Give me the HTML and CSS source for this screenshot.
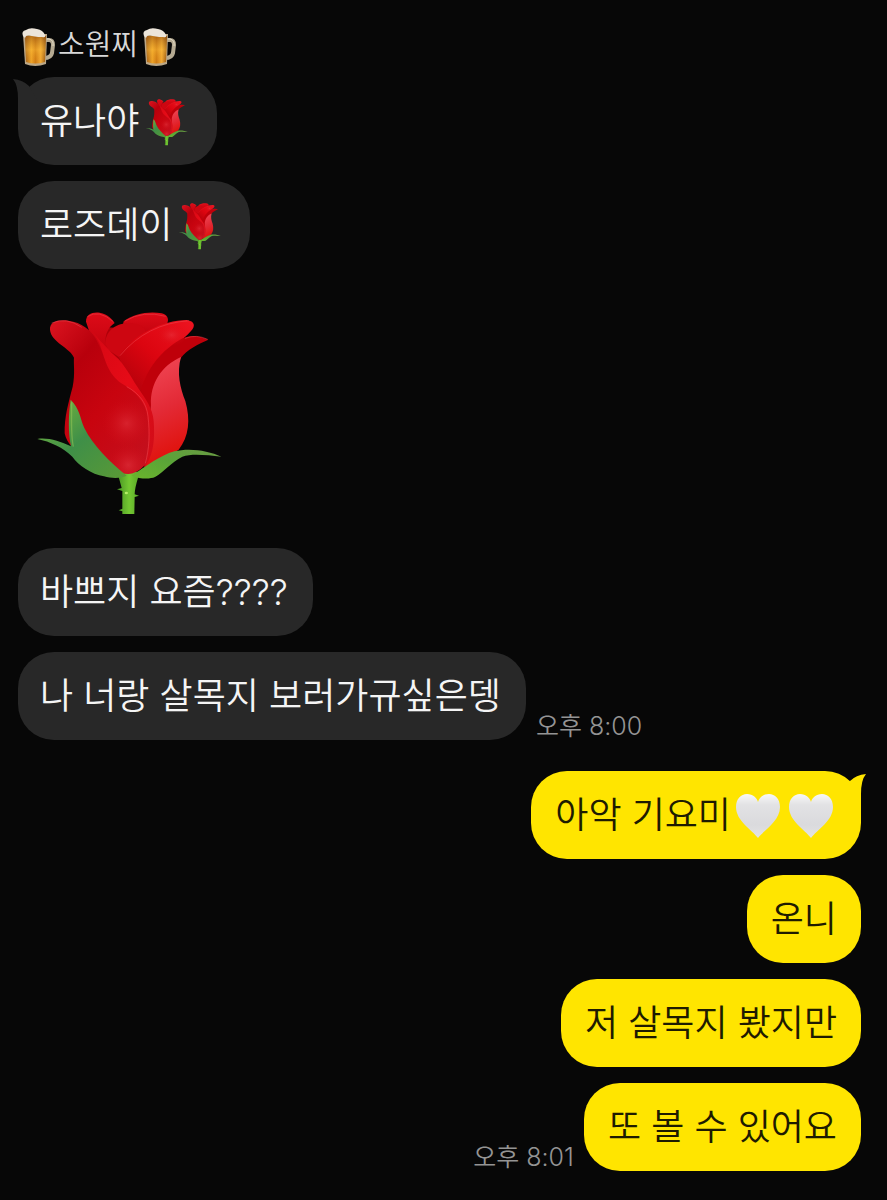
FILE: index.html
```html
<!DOCTYPE html>
<html lang="ko">
<head>
    <meta charset="UTF-8">
    <meta name="viewport" content="width=device-width, initial-scale=1.0">
    <title>소원찌</title>
    <link rel="stylesheet" href="styles.css">
</head>
<body>
    <!-- shared emoji drawings -->
    <svg class="defs" aria-hidden="true">
        <defs>
            <linearGradient id="petalLeft" x1="0" y1="0" x2="0.8" y2="1">
                <stop offset="0" stop-color="#dc1420"/>
                <stop offset="0.3" stop-color="#b8000c"/>
                <stop offset="0.6" stop-color="#c8040f"/>
                <stop offset="1" stop-color="#c4101d"/>
            </linearGradient>
            <linearGradient id="petalRight" x1="0.4" y1="0" x2="0.6" y2="1">
                <stop offset="0" stop-color="#f04654"/>
                <stop offset="0.45" stop-color="#e32a36"/>
                <stop offset="0.85" stop-color="#e01410"/>
                <stop offset="1" stop-color="#d8303c"/>
            </linearGradient>
            <linearGradient id="petalInner" x1="1" y1="0" x2="0.2" y2="1">
                <stop offset="0" stop-color="#ee1420"/>
                <stop offset="0.5" stop-color="#dc0510"/>
                <stop offset="1" stop-color="#a80009"/>
            </linearGradient>
            <linearGradient id="petalBack" x1="0" y1="0" x2="0" y2="1">
                <stop offset="0" stop-color="#dd0b18"/>
                <stop offset="1" stop-color="#b8000a"/>
            </linearGradient>
            <linearGradient id="petalFold" x1="0" y1="0" x2="1" y2="1">
                <stop offset="0" stop-color="#d40713"/>
                <stop offset="0.5" stop-color="#e60b17"/>
                <stop offset="1" stop-color="#cf0d18"/>
            </linearGradient>
            <radialGradient id="petalGlow" cx="0.5" cy="0.5" r="0.5">
                <stop offset="0" stop-color="#e83a44" stop-opacity="0.5"/>
                <stop offset="1" stop-color="#d80812" stop-opacity="0"/>
            </radialGradient>
            <linearGradient id="leafLeft" x1="0" y1="0" x2="1" y2="1">
                <stop offset="0" stop-color="#7fbb3c"/>
                <stop offset="0.5" stop-color="#3f8f48"/>
                <stop offset="1" stop-color="#5a9a35"/>
            </linearGradient>
            <linearGradient id="leafRight" x1="0" y1="1" x2="1" y2="0">
                <stop offset="0" stop-color="#6ab42c"/>
                <stop offset="0.5" stop-color="#5aa438"/>
                <stop offset="1" stop-color="#6a9a44"/>
            </linearGradient>
            <linearGradient id="stem" x1="0" y1="0" x2="1" y2="0">
                <stop offset="0" stop-color="#3f8a20"/>
                <stop offset="0.5" stop-color="#74c832"/>
                <stop offset="1" stop-color="#4d9a22"/>
            </linearGradient>
            <linearGradient id="heartFill" x1="0" y1="0" x2="0" y2="1">
                <stop offset="0" stop-color="#f8f8f8"/>
                <stop offset="0.25" stop-color="#e2e2e4"/>
                <stop offset="0.7" stop-color="#dadadd"/>
                <stop offset="1" stop-color="#e4e4e4"/>
            </linearGradient>
            <linearGradient id="beerFill" x1="0" y1="0" x2="1" y2="0">
                <stop offset="0" stop-color="#9c5c1c"/>
                <stop offset="0.3" stop-color="#f0a528"/>
                <stop offset="0.5" stop-color="#d07c14"/>
                <stop offset="0.75" stop-color="#f2ab35"/>
                <stop offset="1" stop-color="#8c4e10"/>
            </linearGradient>
            <linearGradient id="beerShade" x1="0" y1="0" x2="0" y2="1">
                <stop offset="0" stop-color="#8a4a10" stop-opacity="0.5"/>
                <stop offset="0.5" stop-color="#ffc23c" stop-opacity="0.4"/>
                <stop offset="1" stop-color="#e08a18" stop-opacity="0"/>
            </linearGradient>
            <symbol id="rose" viewBox="0 0 660 690">
                <path fill="url(#stem)" d="M285 530 H370 L355 545 Q344 580 344 598 L357 602 L344 606 L343 657 L307 657 L307 649 L296 646 L307 641 L307 588 L291 583 L305 579 L296 546 Z"/>
                <ellipse cx="319" cy="594" rx="5" ry="4" fill="#b4ee66"/>
                <path fill="#ae0009" d="M215 95 L330 100 L480 120 L470 200 L420 440 L375 520 L300 400 Z"/>
                <path fill="url(#petalBack)" d="M311 79 C340 55 390 48 425 55 C445 60 447 75 441 86 L370 150 L300 130 Z"/>
                <path fill="#cd0611" d="M255 150 C255 105 290 84 330 84 C360 86 378 98 377 112 L310 195 L265 165 Z"/>
                <path fill="url(#petalInner)" d="M297 184 C335 120 430 75 500 75 C525 79 527 94 513 108 C490 135 440 165 420 210 C405 250 400 300 392 345 L320 260 Z"/>
                <path fill="#bf000a" d="M363 286 C385 210 430 165 475 137 C505 117 535 120 565 134 C535 147 500 165 483 188 L400 330 L383 335 Z"/>
                <path fill="url(#petalRight)" d="M483 186 C469 235 481 280 496 318 C512 375 507 425 476 464 L375 525 L393 330 C390 265 425 212 483 186 Z"/>
                <path fill="url(#petalBack)" d="M198 80 C198 58 216 50 239 53 C264 58 278 73 284 84 C265 96 255 117 256 145 L290 215 L225 160 Z"/>
                <path fill="url(#petalLeft)" d="M90 104 C88 80 115 72 145 77 C185 83 212 103 229 134 C245 165 260 215 305 260 C350 285 380 315 393 348 C405 410 400 470 375 510 Q352 535 325 537 C250 535 145 475 134 415 C133 365 145 325 158 275 C166 235 160 205 162 188 C151 158 93 142 90 104 Z"/>
                <ellipse cx="320" cy="385" rx="75" ry="75" fill="url(#petalGlow)"/>
                <ellipse cx="325" cy="510" rx="65" ry="65" fill="url(#petalGlow)" clip-path="url(#cup)"/>
                <ellipse cx="455" cy="120" rx="46" ry="34" fill="url(#petalGlow)"/>
                <path fill="url(#petalFold)" d="M202 93 C242 140 268 167 296 193 C323 224 336 253 361 289 C385 323 402 350 402 395 C404 450 396 485 374 517 C390 455 386 400 382 364 C378 324 344 286 304 265 C262 235 254 190 238 144 C228 123 215 108 202 93 Z"/>
                <path fill="none" stroke="#f0525a" stroke-width="3" stroke-opacity="0.45" d="M320 275 C358 295 380 325 384 364 C390 415 388 460 376 505 M95 84 Q140 65 185 97 M202 65 Q236 42 280 80 M315 78 Q370 45 437 64 M300 182 Q380 86 507 77 M495 130 Q530 117 563 133"/>
                <path fill="url(#leafLeft)" d="M152 314 C180 342 180 370 193 399 C218 450 270 502 320 542 C300 551 275 550 252 544 C215 537 175 512 157 485 C130 458 91 440 52 432 C84 427 120 439 153 454 C144 415 145 360 152 314 Z"/>
                <path fill="none" stroke="#99c958" stroke-width="4" stroke-opacity="0.5" d="M155 322 C155 375 152 420 160 455"/>
                <path fill="url(#leafRight)" d="M335 542 C380 513 420 481 463 469 C510 458 565 467 604 485 C560 480 515 475 487 485 C454 501 432 531 405 546 C389 553 360 552 335 542 Z"/>
            </symbol>
            <clipPath id="cup">
                <path d="M200 420 H376 V508 Q352 537 325 537 Q260 530 200 480 Z"/>
            </clipPath>
            <symbol id="heart" viewBox="0 0 44 44">
                <path fill="url(#heartFill)" d="M22 44 C16 36 0 27 0 13 C0 5 5 0 11 0 C17 0 21 4 22 8 C23 4 27 0 33 0 C39 0 44 5 44 13 C44 27 28 36 22 44 Z"/>
            </symbol>
            <symbol id="beer" viewBox="0 0 43 43">
                <path fill="none" stroke="#b5aa92" stroke-width="4" d="M27 14 H31 Q35 14 35 19 L34 27 Q33 32 26 32"/>
                <path fill="none" stroke="#e4dcc8" stroke-width="1" d="M28 13 H31 Q36 14 35 20"/>
                <path fill="#bca888" d="M5 8 L7 38 Q17 42 28 38 L29 8 Z"/>
                <path fill="url(#beerFill)" d="M7 10 L8 36 Q17 39 27 36 L28 10 Z"/>
                <path fill="url(#beerShade)" d="M7 10 L8 36 Q17 39 27 36 L28 10 Z"/>
                <path fill="#ece5da" d="M5 10 Q3 5 8 4 Q12 1 19 3 Q25 4 27 9 Q28 12 24 11 Q16 11 11 9 Q8 9 7 12 Z"/>
            </symbol>
        </defs>
    </svg>

    <main class="chat">
        <section class="group received">
            <h1 class="sender">
                <svg class="beer" role="img" aria-label="맥주"><use href="#beer"/></svg>
                <span>소원찌</span>
                <svg class="beer" role="img" aria-label="맥주"><use href="#beer"/></svg>
            </h1>
            <div class="bubble">
                <svg class="tail" viewBox="0 0 36 36" aria-hidden="true"><path d="M0 2 Q10 3 16 9 L32 36 H5 V22 Q5 8 0 2 Z"/></svg>
                <span>유나야</span>
                <svg class="rose" role="img" aria-label="장미"><use href="#rose"/></svg>
            </div>
            <div class="bubble">
                <span>로즈데이</span>
                <svg class="rose" role="img" aria-label="장미"><use href="#rose"/></svg>
            </div>
            <svg class="big-rose" role="img" aria-label="장미"><use href="#rose"/></svg>
            <div class="bubble">바쁘지 요즘????</div>
            <div class="row">
                <div class="bubble">나 너랑 살목지 보러가규싶은뎅</div>
                <time class="time" datetime="20:00">오후 8:00</time>
            </div>
        </section>

        <section class="group sent">
            <div class="bubble">
                <svg class="tail" viewBox="0 0 36 36" aria-hidden="true"><path d="M36 3 Q26 4 20 10 L4 36 H31 V23 Q31 9 36 3 Z"/></svg>
                <span>아악 기요미</span>
                <svg class="heart" role="img" aria-label="하얀 하트"><use href="#heart"/></svg>
                <svg class="heart" role="img" aria-label="하얀 하트"><use href="#heart"/></svg>
            </div>
            <div class="bubble">온니</div>
            <div class="bubble">저 살목지 봤지만</div>
            <div class="row">
                <time class="time" datetime="20:01">오후 8:01</time>
                <div class="bubble">또 볼 수 있어요</div>
            </div>
        </section>
    </main>
</body>
</html>
```
FILE: styles.css
```css
* {
    box-sizing: border-box;
}

body {
    margin: 0;
    min-height: 100vh;
    background-color: #070707;
    color: #f5f5f5;
    font-family: Inter, "Noto Sans CJK KR", sans-serif;
    font-weight: 350;
}

.defs {
    position: absolute;
    width: 0;
    height: 0;
}

.chat {
    display: flex;
    flex-direction: column;
    gap: 31px;
    padding: 25px 26px 29px 18px;
}

.group {
    display: flex;
    flex-direction: column;
    align-items: flex-start;
    gap: 16px;
}

.sent {
    align-items: flex-end;
}

.sender {
    display: flex;
    align-items: center;
    height: 44px;
    margin: 0 0 -8px;
    font-size: 29px;
    font-weight: 350;
    line-height: 40px;
    color: #d8d8d8;
}

.sender span {
    margin: 0 1px 0 -3px;
    padding-bottom: 4px;
}

.beer {
    width: 43px;
    height: 43px;
}

.bubble {
    position: relative;
    display: flex;
    align-items: center;
    min-height: 88px;
    padding: 16px 25px 16px 22px;
    border-radius: 36px;
    background-color: #282828;
    font-size: 36px;
    line-height: 48px;
}

.sent .bubble {
    padding: 16px 24px;
    background-color: #ffe500;
    color: #1e1b00;
}

.tail {
    position: absolute;
    top: 0;
    left: -5px;
    width: 36px;
    height: 36px;
    fill: #282828;
}

.sent .tail {
    left: auto;
    right: -5px;
    fill: #ffe500;
}

.rose {
    width: 50px;
    height: 53px;
    margin-left: 3px;
}

.big-rose {
    width: 220px;
    height: 230px;
    margin: 10px 0 7px 2px;
}

.heart {
    width: 44px;
    height: 44px;
    margin: 2px 4px 0 5px;
}

.row {
    display: flex;
    align-items: flex-end;
    gap: 10px;
}

.time {
    font-size: 25px;
    line-height: 28px;
    color: #949494;
}
```
